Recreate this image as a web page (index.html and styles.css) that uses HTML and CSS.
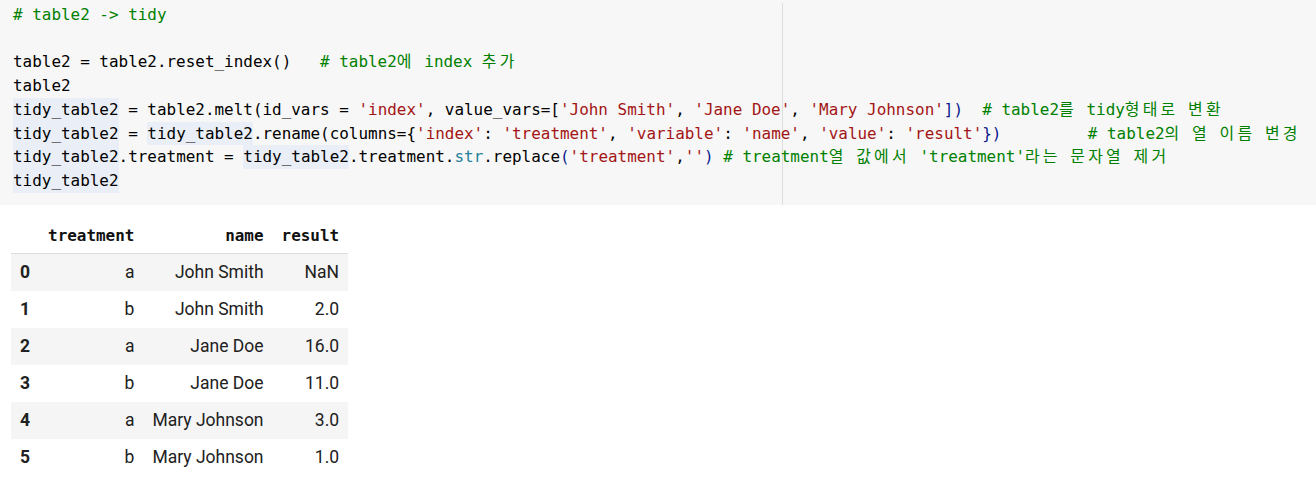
FILE: index.html
```html
<!DOCTYPE html>
<html>
<head>
<meta charset="utf-8">
<link rel="stylesheet" href="styles.css">
</head>
<body>
<div class="cell">
<pre class="code"><span class="cm"># table2 -&gt; tidy</span>

table2 = table2.reset_index()   <span class="cm"># table2<span class="ko">에</span> index <span class="ko">추가</span></span>
table2
<span class="hl">tidy_table2</span> = table2.melt(id_vars = <span class="st">'index'</span>, value_vars=[<span class="st">'John Smith'</span>, <span class="st">'Jane Doe'</span>, <span class="st">'Mary Johnson'</span><span class="br">])</span>  <span class="cm"># table2<span class="ko">를</span> tidy<span class="ko">형태로</span> <span class="ko">변환</span></span>
<span class="hl">tidy_table2</span> = <span class="hl">tidy_table2</span>.rename(columns={<span class="st">'index'</span>: <span class="st">'treatment'</span>, <span class="st">'variable'</span>: <span class="st">'name'</span>, <span class="st">'value'</span>: <span class="st">'result'</span><span class="br">})</span>         <span class="cm"># table2<span class="ko">의</span> <span class="ko">열</span> <span class="ko">이름</span> <span class="ko">변경</span></span>
<span class="hl">tidy_table2</span>.treatment = <span class="hl">tidy_table2</span>.treatment.<span class="fn">str</span>.replace<span class="br">(</span><span class="st">'treatment'</span>,<span class="st">''</span><span class="br">)</span> <span class="cm"># treatment<span class="ko">열</span> <span class="ko">값에서</span> 'treatment'<span class="ko">라는</span> <span class="ko">문자열</span> <span class="ko">제거</span></span>
<span class="hl">tidy_table2</span></pre>
</div>
<div class="output">
<table class="df">
<thead>
<tr><th></th><th>treatment</th><th>name</th><th>result</th></tr>
</thead>
<tbody>
<tr><th>0</th><td>a</td><td>John Smith</td><td>NaN</td></tr>
<tr><th>1</th><td>b</td><td>John Smith</td><td>2.0</td></tr>
<tr><th>2</th><td>a</td><td>Jane Doe</td><td>16.0</td></tr>
<tr><th>3</th><td>b</td><td>Jane Doe</td><td>11.0</td></tr>
<tr><th>4</th><td>a</td><td>Mary Johnson</td><td>3.0</td></tr>
<tr><th>5</th><td>b</td><td>Mary Johnson</td><td>1.0</td></tr>
</tbody>
</table>
</div>
</body>
</html>
```
FILE: styles.css
```css
html, body {
  margin: 0;
  padding: 0;
  background: #ffffff;
}

.cell {
  background-color: #f7f7f7;
  background-image: linear-gradient(#dddddd, #dddddd);
  background-repeat: no-repeat;
  background-position: 782px 3px;
  background-size: 1px calc(100% - 3px);
  height: 205px;
  box-sizing: border-box;
  padding: 3px 0 0 13px;
}

.code {
  margin: 0;
  font-family: "DejaVu Sans Mono", "Noto Sans CJK KR", monospace;
  font-size: 15.95px;
  line-height: 23.7px;
  color: #000000;
  white-space: pre;
}

.cm { color: #008000; }
.st { color: #a31515; }
.fn { color: #267f99; }
.br { color: #0b1a8c; }

.ko {
  font-family: "Noto Sans CJK KR", sans-serif;
  letter-spacing: 3.2px;
  line-height: 14px;
}

.hl {
  display: inline-block;
  background: #e9eef7;
  line-height: 23.7px;
  vertical-align: top;
}

.output {
  padding: 11px 0 0 11px;
}

.df {
  border-collapse: collapse;
  font-family: Roboto, "Liberation Sans", sans-serif;
  font-size: 17.5px;
  color: #212121;
}

.df thead th {
  font-family: "DejaVu Sans Mono", "Liberation Mono", monospace;
  font-weight: bold;
  font-size: 15.95px;
  color: #111111;
  height: 37px;
  box-sizing: border-box;
  border-bottom: 1px solid #dddddd;
  text-align: right;
  padding: 2px 9px 0;
}

.df tbody th {
  font-weight: bold;
  text-align: left;
  padding: 0 9px;
  height: 37px;
  color: #212121;
}

.df td {
  text-align: right;
  padding: 0 9px;
  height: 37px;
  white-space: nowrap;
}

.df tbody tr:nth-child(odd) {
  background: #f5f5f5;
}
```
